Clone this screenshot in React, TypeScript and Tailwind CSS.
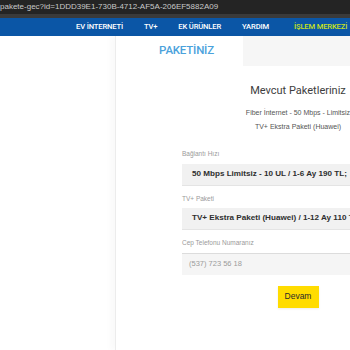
export default function App() {
  const nav = ["EV İNTERNETİ", "TV+", "EK ÜRÜNLER", "YARDIM"];

  return (
    <div className="w-[350px] h-[350px] overflow-hidden bg-white flex flex-col font-['Roboto',sans-serif]">
      {/* Address bar */}
      <div className="h-[14px] shrink-0 bg-[#242424] flex items-center">
        <span className="text-[8px] leading-none text-[#c9c9c9] whitespace-nowrap font-['Liberation_Sans',sans-serif]">
          pakete-gec?id=1DDD39E1-730B-4712-AF5A-206EF5882A09
        </span>
      </div>
      <div className="h-[4px] shrink-0 bg-[#3a3a3a]" />

      {/* Nav */}
      <div className="h-[18px] shrink-0 bg-[#0b56a6] flex items-center pl-[76px] gap-[21px] whitespace-nowrap">
        {nav.map((n) => (
          <span key={n} className="text-[7.6px] leading-none font-medium text-white tracking-[-0.15px]">
            {n}
          </span>
        ))}
        <span className="text-[7.6px] leading-none font-medium text-[#c8e21b] tracking-[-0.15px] pl-[4px]">
          İŞLEM MERKEZİ
        </span>
      </div>

      {/* Body */}
      <div className="flex-1 flex min-h-0">
        <div className="w-[115px] shrink-0" />
        <div className="flex-1 flex flex-col border-l border-[#ececec] shadow-[-5px_0_6px_rgba(0,0,0,0.025)] min-w-0">
          {/* Tabs */}
          <div className="flex h-[30px] shrink-0">
            <div className="w-[127px] shrink-0 flex justify-center pt-[9px] pl-[14px]">
              <span className="text-[11.5px] leading-none font-medium text-[#4ba2dc] tracking-[-0.2px]">
                PAKETİNİZ
              </span>
            </div>
            <div className="flex-1 bg-[#f6f6f6]" />
          </div>

          {/* Form column */}
          <div className="ml-[66px] w-[232px] shrink-0 flex flex-col">
            <div className="pt-[19px] text-center text-[11px] leading-none text-[#3d3d3d] whitespace-nowrap">
              Mevcut Paketleriniz
            </div>
            <div className="pt-[13px] text-center text-[7px] leading-none text-[#555] whitespace-nowrap font-['Liberation_Sans',sans-serif]">
              Fiber İnternet - 50 Mbps - Limitsiz
            </div>
            <div className="pt-[7px] text-center text-[7px] leading-none text-[#555] whitespace-nowrap font-['Liberation_Sans',sans-serif]">
              TV+ Ekstra Paketi (Huawei)
            </div>

            <div className="pt-[21px] font-['Liberation_Sans',sans-serif]">
              <div className="text-[6.5px] leading-none text-[#9a9a9a]">Bağlantı Hızı</div>
              <div className="mt-[6px] h-[22px] bg-[#f1f1f1] border-b border-[#e4e4e4] flex items-center pl-[10px] whitespace-nowrap">
                <span className="text-[8.1px] font-bold text-[#2e2e2e]">50 Mbps Limitsiz - 10 UL / 1-6 Ay 190 TL;</span>
              </div>

              <div className="mt-[10px] text-[6.5px] leading-none text-[#9a9a9a]">TV+ Paketi</div>
              <div className="mt-[6px] h-[22px] bg-[#f1f1f1] border-b border-[#e4e4e4] flex items-center pl-[10px] whitespace-nowrap">
                <span className="text-[8.1px] font-bold text-[#2e2e2e]">TV+ Ekstra Paketi (Huawei) / 1-12 Ay 110 TL;</span>
              </div>

              <div className="mt-[10px] text-[6.5px] leading-none text-[#9a9a9a]">Cep Telefonu Numaranız</div>
              <div className="mt-[6px] h-[22px] bg-[#f5f5f5] border-t border-[#dcdcdc] flex items-center pl-[7px] whitespace-nowrap">
                <span className="text-[7.5px] text-[#9c9c9c]">(537) 723 56 18</span>
              </div>

              <div className="flex justify-center pt-[11px]">
                <button className="w-[41px] h-[22px] bg-[#ffdc00] shadow-[0_1px_2px_rgba(0,0,0,0.08)] text-[8.5px] text-[#2a2a2a] flex items-center justify-center">
                  Devam
                </button>
              </div>
            </div>
          </div>
        </div>
      </div>
    </div>
  );
}
